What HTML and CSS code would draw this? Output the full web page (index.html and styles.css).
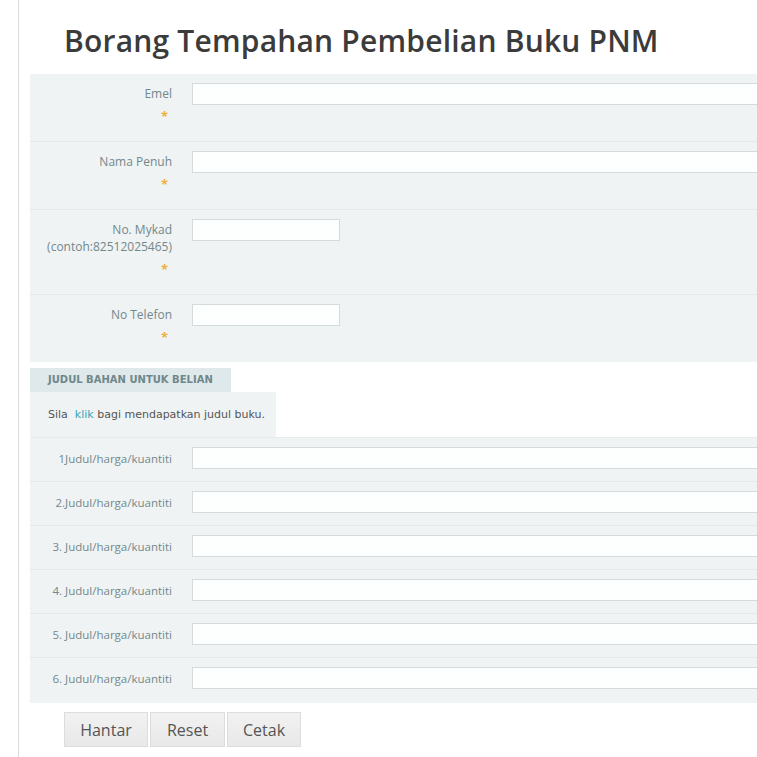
FILE: index.html
```html
<!DOCTYPE html>
<html lang="ms">
<head>
<meta charset="utf-8">
<title>Borang Tempahan Pembelian Buku PNM</title>
<link rel="stylesheet" href="styles.css">
</head>
<body>
<div class="page">
  <h1 class="title">Borang Tempahan Pembelian Buku PNM</h1>
  <form class="form">
    <div class="panel">
      <div class="row">
        <div class="label">Emel<div class="req">*</div></div>
        <div class="field"><input class="input wide" type="text"></div>
      </div>
      <div class="row">
        <div class="label">Nama Penuh<div class="req">*</div></div>
        <div class="field"><input class="input wide" type="text"></div>
      </div>
      <div class="row">
        <div class="label">No. Mykad<br>(contoh:82512025465)<div class="req">*</div></div>
        <div class="field"><input class="input short" type="text"></div>
      </div>
      <div class="row">
        <div class="label">No Telefon<div class="req">*</div></div>
        <div class="field"><input class="input short" type="text"></div>
      </div>
    </div>
    <div class="tab">JUDUL BAHAN UNTUK BELIAN</div>
    <div class="info">Sila &nbsp;<a class="link" href="#">klik</a> bagi mendapatkan judul buku.</div>
    <div class="panel panel-books">
      <div class="row brow">
        <div class="label blabel">1Judul/harga/kuantiti</div>
        <div class="field"><input class="input wide" type="text"></div>
      </div>
      <div class="row brow">
        <div class="label blabel">2.Judul/harga/kuantiti</div>
        <div class="field"><input class="input wide" type="text"></div>
      </div>
      <div class="row brow">
        <div class="label blabel">3. Judul/harga/kuantiti</div>
        <div class="field"><input class="input wide" type="text"></div>
      </div>
      <div class="row brow">
        <div class="label blabel">4. Judul/harga/kuantiti</div>
        <div class="field"><input class="input wide" type="text"></div>
      </div>
      <div class="row brow">
        <div class="label blabel">5. Judul/harga/kuantiti</div>
        <div class="field"><input class="input wide" type="text"></div>
      </div>
      <div class="row brow">
        <div class="label blabel">6. Judul/harga/kuantiti</div>
        <div class="field"><input class="input wide" type="text"></div>
      </div>
    </div>
    <div class="buttons">
      <button class="btn btn-hantar" type="button">Hantar</button>
      <button class="btn btn-reset" type="button">Reset</button>
      <button class="btn btn-cetak" type="button">Cetak</button>
    </div>
  </form>
</div>
</body>
</html>
```
FILE: styles.css
```css
html, body {
  margin: 0;
  padding: 0;
  background: #fff;
  overflow: hidden;
}
body {
  font-family: "Open Sans", "Liberation Sans", sans-serif;
  color: #333;
}
.page {
  margin-left: 18px;
  border-left: 1px solid #dcdcdc;
  padding-left: 11px;
  min-height: 757px;
  width: 900px;
  box-sizing: border-box;
}
.title {
  margin: 0;
  padding: 21px 0 0 34px;
  height: 74px;
  box-sizing: border-box;
  font-size: 30px;
  font-weight: 600;
  line-height: 40px;
  color: #3b3b3b;
  letter-spacing: 0.2px;
}
.form {
  margin: 0;
}
.panel {
  background: #eff3f4;
  width: 860px;
}
.row {
  display: grid;
  grid-template-columns: 142px 1fr;
  column-gap: 20px;
  padding: 9px 0 16px;
  border-bottom: 1px solid #e3e9ea;
}
.row:last-child {
  border-bottom: none;
}
.label {
  text-align: right;
  font-size: 12px;
  line-height: 17px;
  color: #73888b;
  padding-top: 2px;
}
.req {
  color: #f0b03c;
  font-size: 13px;
  font-weight: 700;
  line-height: 17px;
  margin-top: 6px;
  padding-right: 4px;
}
.input {
  display: block;
  height: 22px;
  box-sizing: border-box;
  border: 1px solid #d3dbdc;
  background: #fdfefe;
  margin: 0;
  padding: 0 4px;
}
.wide {
  width: 660px;
}
.short {
  width: 148px;
}
.tab {
  margin-top: 6px;
  width: 201px;
  height: 24px;
  box-sizing: border-box;
  background: #dfe8ea;
  padding-left: 18px;
  font-family: "DejaVu Sans", Verdana, sans-serif;
  font-size: 10px;
  font-weight: bold;
  line-height: 24px;
  color: #6e878b;
  white-space: nowrap;
}
.info {
  width: 246px;
  height: 45px;
  box-sizing: border-box;
  background: #eff3f4;
  padding-left: 18px;
  font-family: "DejaVu Sans", Verdana, sans-serif;
  font-size: 11px;
  line-height: 45px;
  color: #555;
  white-space: nowrap;
}
.link {
  color: #3aa6b4;
  text-decoration: none;
}
.panel-books {
  border-top: 1px solid #e6ecec;
  padding-bottom: 2px;
}
.brow {
  padding: 9px 0 12px;
  align-items: center;
}
.blabel {
  font-size: 11.5px;
  padding-top: 0;
}
.buttons {
  display: flex;
  gap: 2px;
  margin: 9px 0 0 34px;
}
.btn {
  height: 35px;
  box-sizing: border-box;
  border: 1px solid #dddddd;
  background: linear-gradient(#f2f2f2, #e8e8e8);
  font-family: "Open Sans", "Liberation Sans", sans-serif;
  font-size: 16px;
  color: #555;
  padding: 0;
  margin: 0;
}
.btn-hantar { width: 84px; }
.btn-reset { width: 75px; }
.btn-cetak { width: 74px; }
```
